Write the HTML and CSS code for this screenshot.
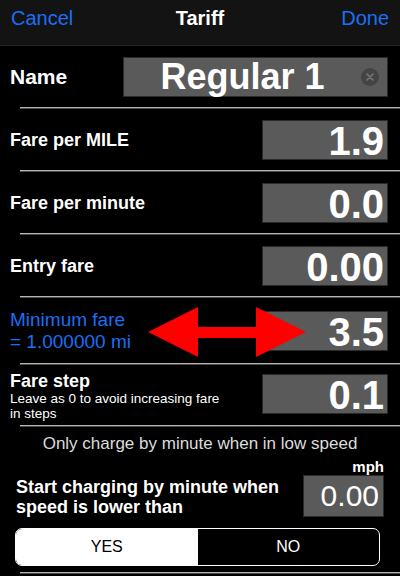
FILE: index.html
```html
<!DOCTYPE html>
<html>
	<head>
		<meta charset="UTF-8">
		<title>Tariff</title>
		<link rel="stylesheet" href="styles.css">
	</head>
	<body>

		<header class="nav">
			<span class="nav-btn">Cancel</span>
			<span class="nav-title">Tariff</span>
			<span class="nav-btn done">Done</span>
		</header>

		<div class="form">
			<div class="row">
				<span class="label label-name">Name</span>
				<div class="field field-name">
					<span class="field-text">Regular 1</span>
					<span class="clear">
						<svg width="18" height="18" viewBox="0 0 18 18">
							<circle cx="9" cy="9" r="9" fill="#444"/>
							<path d="M6 6 L12 12 M12 6 L6 12" stroke="#777" stroke-width="1.6" stroke-linecap="round"/>
						</svg>
					</span>
				</div>
			</div>
			<hr class="sep">

			<div class="row">
				<span class="label">Fare per MILE</span>
				<div class="field">1.9</div>
			</div>
			<hr class="sep">

			<div class="row">
				<span class="label">Fare per minute</span>
				<div class="field">0.0</div>
			</div>
			<hr class="sep">

			<div class="row">
				<span class="label">Entry fare</span>
				<div class="field">0.00</div>
			</div>
			<hr class="sep">

			<div class="row row-arrow">
				<span class="label label-blue">Minimum fare<br>= 1.000000 mi</span>
				<div class="field">3.5</div>
				<!-- double arrow drawn over the row -->
				<svg class="arrow" width="160" height="52" viewBox="0 0 160 52">
					<polygon points="0,26 50,1 50,21 108,21 108,1 158,26 108,51 108,32 50,32 50,51" fill="#ff0000"/>
				</svg>
			</div>
			<hr class="sep">

			<div class="row row-tall">
				<div class="label-block">
					<span class="label">Fare step</span>
					<span class="hint">Leave as 0 to avoid increasing fare in steps</span>
				</div>
				<div class="field">0.1</div>
			</div>
			<hr class="sep">

			<p class="note">Only charge by minute when in low speed</p>

			<div class="speed">
				<span class="label speed-label">Start charging by minute when speed is lower than</span>
				<div class="speed-right">
					<span class="unit">mph</span>
					<div class="field field-speed">0.00</div>
				</div>
			</div>

			<div class="segment">
				<span class="seg seg-on">YES</span>
				<span class="seg">NO</span>
			</div>
			<hr class="sep">
		</div>

	</body>
</html>
```

FILE: styles.css
```css
*{
	margin: 0;
	padding: 0;
	box-sizing: border-box;
}
body{
	width: 400px;
	height: 576px;
	overflow: hidden;
	background: #000;
	color: #fff;
	font-family: "Liberation Sans", Arial, sans-serif;
}

/* nav bar */
.nav{
	display: grid;
	grid-template-columns: 1fr auto 1fr;
	align-items: center;
	height: 46px;
	padding: 0 11px 9px;
	background: #131313;
	border-bottom: 1px solid #242424;
	font-size: 20px;
}
.nav-btn{
	color: #1a6ff5;
}
.nav-title{
	font-weight: bold;
}
.done{
	text-align: right;
}

/* rows */
.row{
	display: flex;
	align-items: center;
	justify-content: space-between;
	padding: 10.5px 12px 10.5px 10px;
}
.row-arrow{
	position: relative;
}
.row-tall{
	padding: 6px 12px 4px 10px;
}
.row-tall .field{
	margin-top: -5px;
}
.sep{
	margin: 0 0 0 20px;
	height: 2px;
	border: 0;
	border-top: 1px solid #b4b4b4;
	border-bottom: 1px solid #4c4c4c;
}
.label{
	font-size: 18px;
	font-weight: bold;
	line-height: 20px;
}
.label-name{
	font-size: 21px;
	text-shadow: 0 0 2px #000;
}
.label-blue{
	color: #1a6ff5;
	font-weight: normal;
	font-size: 19px;
	line-height: 22px;
}
.label-block{
	display: flex;
	flex-direction: column;
	width: 221px;
}
.hint{
	font-size: 13.5px;
	line-height: 15px;
}

/* value fields */
.field{
	width: 126px;
	height: 40px;
	background: #5a5a5a;
	border: 1px solid #2a2a2a;
	padding: 2px 3px 0 0;
	font-size: 40px;
	font-weight: bold;
	line-height: 36px;
	text-align: right;
	white-space: nowrap;
}
.field-name{
	display: flex;
	align-items: center;
	width: 265px;
	padding: 0 8px 0 0;
	font-size: 36px;
	line-height: 38px;
}
.field-text{
	flex: 1;
	text-align: center;
}
.clear{
	display: flex;
	width: 18px;
	height: 18px;
}
.arrow{
	position: absolute;
	left: 148px;
	top: 8px;
}

/* low speed section */
.note{
	margin-top: 7px;
	font-size: 17px;
	line-height: 20px;
	color: #dcdcdc;
	text-align: center;
}
.speed{
	display: flex;
	align-items: flex-end;
	justify-content: space-between;
	gap: 16px;
	padding: 5px 16px 0;
}
.speed-label{
	flex: 1;
}
.speed-right{
	display: flex;
	flex-direction: column;
	align-items: flex-end;
}
.unit{
	font-size: 15px;
	font-weight: bold;
	line-height: 16px;
}
.field-speed{
	width: 81px;
	height: 42px;
	padding: 0 4px 0 0;
	font-size: 30px;
	font-weight: normal;
	line-height: 40px;
}
.segment{
	display: flex;
	height: 38px;
	margin: 11px 20px 6px 15px;
	border: 1.5px solid #fff;
	border-radius: 7px;
	overflow: hidden;
}
.seg{
	flex: 1;
	display: flex;
	align-items: center;
	justify-content: center;
	font-size: 16px;
}
.seg-on{
	background: #fff;
	color: #000;
}
```
